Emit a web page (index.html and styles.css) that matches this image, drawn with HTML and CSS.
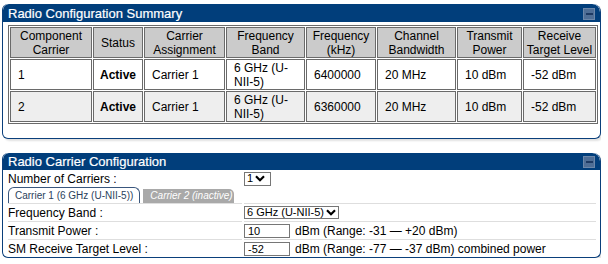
FILE: index.html
```html
<!DOCTYPE html>
<html>
<head>
<meta charset="utf-8">
<link rel="stylesheet" href="styles.css">
</head>
<body>
<div class="panel panel-summary">
  <div class="panel-head">
    <span class="panel-title">Radio Configuration Summary</span>
    <span class="min-btn"><span class="min-bar"></span></span>
  </div>
  <div class="panel-body summary-body">
    <table class="summary">
      <colgroup>
        <col class="c1"><col class="c2"><col class="c3"><col class="c4">
        <col class="c5"><col class="c6"><col class="c7"><col class="c8">
      </colgroup>
      <thead>
        <tr>
          <th>Component Carrier</th>
          <th>Status</th>
          <th>Carrier Assignment</th>
          <th>Frequency Band</th>
          <th>Frequency (kHz)</th>
          <th>Channel Bandwidth</th>
          <th>Transmit Power</th>
          <th>Receive Target Level</th>
        </tr>
      </thead>
      <tbody>
        <tr class="row-odd">
          <td>1</td>
          <td class="status">Active</td>
          <td>Carrier 1</td>
          <td>6 GHz (U-NII-5)</td>
          <td>6400000</td>
          <td>20 MHz</td>
          <td>10 dBm</td>
          <td>-52 dBm</td>
        </tr>
        <tr class="row-even">
          <td>2</td>
          <td class="status">Active</td>
          <td>Carrier 1</td>
          <td>6 GHz (U-NII-5)</td>
          <td>6360000</td>
          <td>20 MHz</td>
          <td>10 dBm</td>
          <td>-52 dBm</td>
        </tr>
      </tbody>
    </table>
  </div>
</div>

<div class="panel panel-carrier">
  <div class="panel-head">
    <span class="panel-title">Radio Carrier Configuration</span>
    <span class="min-btn"><span class="min-bar"></span></span>
  </div>
  <div class="panel-body carrier-body">
    <div class="form-grid">
      <div class="cell label first">Number of Carriers :</div>
      <div class="cell value first">
        <span class="sel sel-small"><span class="sel-text">1</span><svg class="chev" width="10" height="7" viewBox="0 0 10 7"><path d="M1 1.2 L5 5.2 L9 1.2" fill="none" stroke="#000" stroke-width="2.2"/></svg></span>
      </div>
      <div class="tabs-row">
        <span class="tab tab-active">Carrier 1 (6 GHz (U-NII-5))</span>
        <span class="tab tab-inactive">Carrier 2 (inactive)</span>
      </div>
      <div class="cell label">Frequency Band :</div>
      <div class="cell value">
        <span class="sel sel-band"><span class="sel-text">6 GHz (U-NII-5)</span><svg class="chev" width="10" height="7" viewBox="0 0 10 7"><path d="M1 1.2 L5 5.2 L9 1.2" fill="none" stroke="#000" stroke-width="2.2"/></svg></span>
      </div>
      <div class="cell label">Transmit Power :</div>
      <div class="cell value">
        <span class="txt">10</span><span class="unit">dBm (Range: -31 — +20 dBm)</span>
      </div>
      <div class="cell label">SM Receive Target Level :</div>
      <div class="cell value">
        <span class="txt">-52</span><span class="unit">dBm (Range: -77 — -37 dBm) combined power</span>
      </div>
    </div>
  </div>
</div>
</body>
</html>
```

FILE: styles.css
```css
html, body {
  margin: 0;
  padding: 0;
  background: #ffffff;
}

body {
  font-family: "Liberation Sans", Arial, sans-serif;
  font-size: 12px;
  color: #000;
  padding: 4px 0 0 2px;
  width: 599px;
}

.panel {
  border: 1px solid #0a3f7b;
  border-top: none;
  border-radius: 6px 8px 6px 6px;
  box-shadow: 2px 2px 2px rgba(0, 0, 0, 0.12);
  background: #fff;
  overflow: hidden;
}

.panel-carrier {
  margin-top: 14px;
}

.panel-head {
  background: #013e7b;
  color: #fff;
  height: 18px;
  display: flex;
  align-items: center;
  justify-content: space-between;
  padding: 0 5px 0 5px;
  border-radius: 6px 8px 0 0;
}

.panel-carrier .panel-head {
  height: 17px;
}

.panel-title {
  font-size: 13px;
  line-height: 18px;
  padding-top: 1px;
  -webkit-text-stroke: 0.2px #fff;
}

.min-btn {
  width: 10px;
  height: 10px;
  background: #4f6e96;
  border: 1px solid #6c87a9;
  display: flex;
  align-items: center;
  justify-content: center;
  margin-top: 1px;
}

.min-bar {
  width: 7px;
  height: 2px;
  background: #1e3a63;
}

/* Summary table */
.summary-body {
  padding: 3px 6px 14px 5px;
}

.summary {
  border: 1px solid #6a6a6a;
  border-spacing: 1px;
  table-layout: fixed;
  width: 587px;
  font-size: 12px;
}

.c1 { width: 82px; }
.c2 { width: 50px; }
.c3 { width: 81px; }
.c4 { width: 79px; }
.c5 { width: 70px; }
.c6 { width: 79px; }
.c7 { width: 65px; }
.c8 { width: 73px; }

.summary th,
.summary td {
  border: 1px solid #6a6a6a;
  line-height: 14px;
  height: 28px;
  padding: 1px 6px 0 7px;
  vertical-align: middle;
}

.summary th {
  background: #cbcbcb;
  font-weight: normal;
  text-align: center;
  padding: 1px 1px 0 1px;
}

.summary td {
  text-align: left;
}

.summary td.status {
  font-weight: bold;
  text-align: center;
  padding: 1px 2px 0 2px;
}

.row-odd td { background: #ffffff; }
.row-even td { background: #eeeeee; }

/* Carrier configuration */
.carrier-body {
  padding: 0 4px 0 5px;
}

.form-grid {
  display: grid;
  grid-template-columns: 234px 1fr;
  column-gap: 2px;
}

.cell {
  height: 17px;
  display: flex;
  align-items: center;
  border-top: 1px solid #dedede;
  white-space: nowrap;
}

.cell.first {
  border-top: none;
  height: 17px;
}

.tabs-row {
  grid-column: 1 / 3;
  height: 16px;
  display: flex;
  align-items: flex-end;
  gap: 3px;
}

.tab {
  font-size: 10px;
  line-height: 14px;
  height: 14px;
  padding: 0 6px 0 6px;
  white-space: nowrap;
}

.tab-active {
  border: 1px solid #39567d;
  border-bottom: none;
  border-radius: 6px 6px 0 0;
  color: #2b3f5c;
  height: 15px;
  line-height: 15px;
}

.tab-inactive {
  background: #a9a9a9;
  color: #fff;
  font-style: italic;
  border-radius: 0 5px 0 0;
  width: 78px;
  padding: 0 6px 0 7px;
}

.value {
  gap: 5px;
}

.sel {
  display: inline-flex;
  align-items: center;
  border: 1px solid #767676;
  background: #fff;
  height: 11px;
  font-size: 11px;
  line-height: 11px;
  padding: 0 2px 0 2px;
  gap: 2px;
}

.sel-small {
  width: 21px;
  height: 12px;
}

.sel-band {
  width: auto;
}

.sel-text {
  white-space: nowrap;
}

.chev {
  display: block;
  flex-shrink: 0;
}

.txt {
  display: inline-block;
  width: 41px;
  height: 12px;
  border: 1px solid #767676;
  font-size: 11px;
  line-height: 12px;
  padding: 0 0 0 3px;
}

.unit {
  font-size: 12px;
}
```
